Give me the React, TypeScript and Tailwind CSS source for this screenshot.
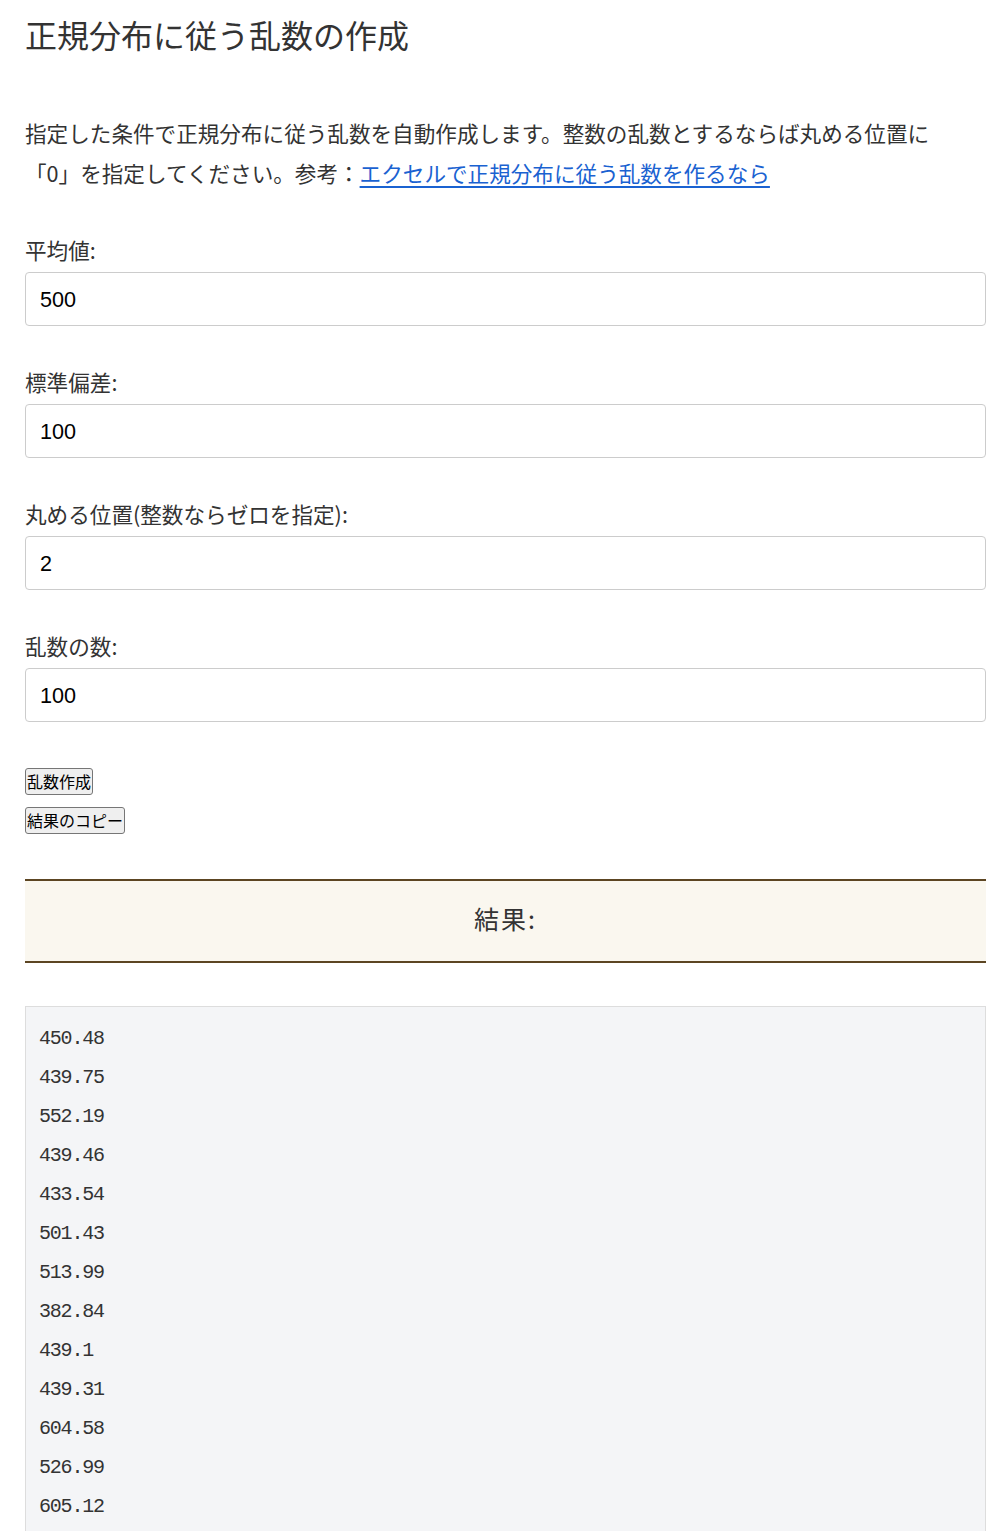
import React from "react";

const shown = [
  "450.48", "439.75", "552.19", "439.46", "433.54", "501.43", "513.99",
  "382.84", "439.1", "439.31", "604.58", "526.99", "605.12",
];

function makeRest(): string[] {
  let s = 12345;
  const rnd = () => {
    s = (s * 1103515245 + 12345) % 2147483648;
    return s / 2147483648;
  };
  const out: string[] = [];
  for (let i = 0; i < 87; i++) {
    const u = Math.max(rnd(), 1e-6);
    const v = rnd();
    const z = Math.sqrt(-2 * Math.log(u)) * Math.cos(2 * Math.PI * v);
    out.push(String(Math.round((500 + 100 * z) * 100) / 100));
  }
  return out;
}

const numbers = [...shown, ...makeRest()];

const jp = "font-['Meiryo','Noto_Sans_CJK_JP',sans-serif]";

function Field({ label, value }: { label: string; value: string }) {
  return (
    <div className="mt-[36px] first:mt-[37px]">
      <div className="text-[21.6px] leading-[40px] text-[#333]">{label}</div>
      <input
        readOnly
        value={value}
        className="mt-[2px] box-border block h-[54px] w-full rounded-[4px] border border-[#ccc] bg-white px-[14px] pt-[2px] font-['Liberation_Sans',Arial,sans-serif] text-[21.6px] text-black outline-none"
      />
    </div>
  );
}

export default function App() {
  return (
    <div className={`bg-white pl-[25px] pr-[22px] pb-0 ${jp} text-[#333]`}>
      <h1 className="mt-[14px] text-[32px] font-normal leading-[40px] text-[#333]">
        正規分布に従う乱数の作成
      </h1>
      <p className="mt-[59px] text-[21.6px] leading-[40px] text-[#333]">
        指定した条件で正規分布に従う乱数を自動作成します。整数の乱数とするならば丸める位置に
        <br />
        「0」を指定してください。参考：
        <a href="#" className="text-[#1a62d1] underline underline-offset-[4px]">
          エクセルで正規分布に従う乱数を作るなら
        </a>
      </p>
      <div>
        <Field label="平均値:" value="500" />
        <Field label="標準偏差:" value="100" />
        <Field label="丸める位置(整数ならゼロを指定):" value="2" />
        <Field label="乱数の数:" value="100" />
      </div>
      <div className="mt-[46px] flex flex-col items-start gap-[12px]">
        <button className="box-border h-[27px] rounded-[3px] border border-[#767676] bg-[#efefef] px-[1px] text-[16px] leading-[23px] text-black">
          乱数作成
        </button>
        <button className="box-border h-[27px] rounded-[3px] border border-[#767676] bg-[#efefef] px-[1px] text-[16px] leading-[23px] text-black">
          結果のコピー
        </button>
      </div>
      <div className="mt-[45px] box-border flex h-[84px] items-center justify-center border-y-2 border-[#5c4522] bg-[#faf7ef] pb-[5px] text-[25px] tracking-[2px] text-[#333]">
        結果:
      </div>
      <div className="mt-[43px] border border-[#ddd] bg-[#f4f5f7] px-[13px] py-[12px] font-['Liberation_Mono',monospace] text-[20px] leading-[39px] tracking-[-1.2px] text-[#333]">
        {numbers.map((n, i) => (
          <div key={i}>{n}</div>
        ))}
      </div>
    </div>
  );
}
